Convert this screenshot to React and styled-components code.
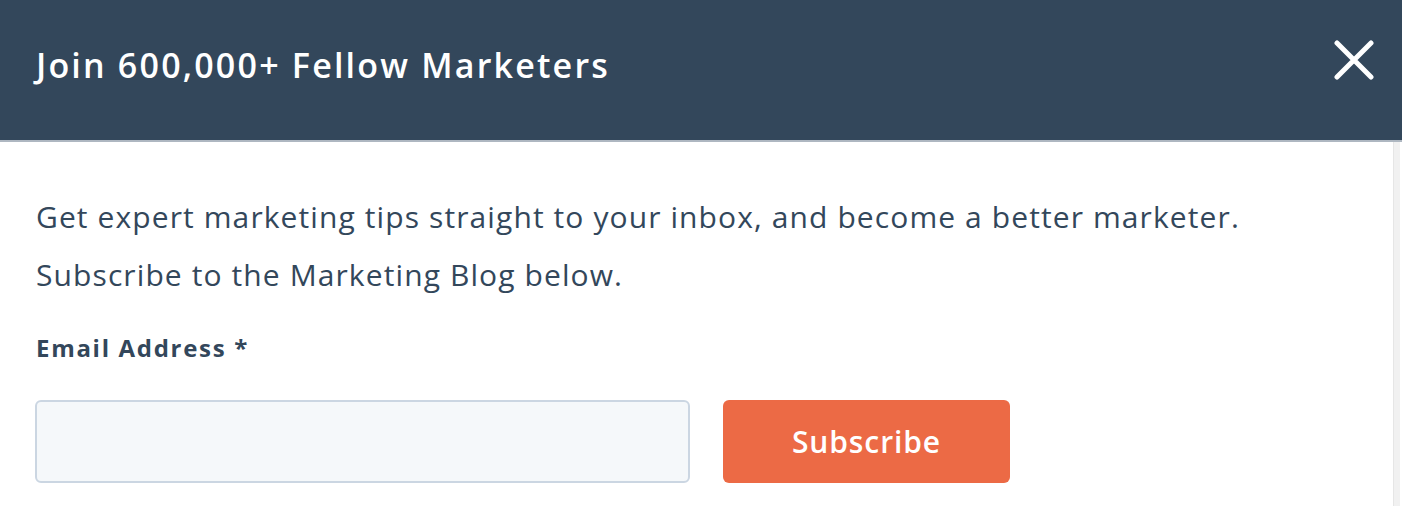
import React from "react"
import styled, { createGlobalStyle } from "styled-components"

const colors = {
  slate: "#33475b",
  white: "#ffffff",
  inputBg: "#f5f8fa",
  inputBorder: "#cbd6e2",
  orange: "#ec6a45",
  track: "#f1f1f1",
}

const GlobalStyle = createGlobalStyle`
  html, body {
    margin: 0;
    padding: 0;
    background: ${colors.white};
  }
  body {
    font-family: "Open Sans", "Liberation Sans", sans-serif;
    color: ${colors.slate};
  }
`

const StyledModal = styled.div`
  width: 1402px;
  height: 506px;
  display: flex;
  flex-direction: column;
  overflow: hidden;
`
const StyledHeader = styled.header`
  display: flex;
  align-items: flex-start;
  justify-content: space-between;
  height: 142px;
  padding: 40px 28px 0 36px;
  box-sizing: border-box;
  background: ${colors.slate};
  border-bottom: 2px solid #aeb7c1;
  flex-shrink: 0;
`
const StyledTitle = styled.h1`
  margin: 3px 0 0;
  font-size: 34px;
  line-height: 44px;
  font-weight: 600;
  color: ${colors.white};
  letter-spacing: 2.2px;
`
const StyledClose = styled.button`
  width: 40px;
  height: 40px;
  padding: 0;
  border: 0;
  background: none;
  display: flex;
  cursor: pointer;
  svg {
    width: 40px;
    height: 40px;
  }
`
const StyledBody = styled.div`
  flex: 1;
  display: flex;
`
const StyledContent = styled.div`
  flex: 1;
  padding: 46px 36px 0;
`
const StyledTrack = styled.div`
  width: 6px;
  margin-right: 2px;
  background: ${colors.track};
  border-left: 1px solid #e6e6e6;
`
const StyledIntro = styled.p`
  margin: 0;
  font-size: 30px;
  line-height: 58px;
  color: ${colors.slate};
  letter-spacing: 1.1px;
`
const StyledLabel = styled.label`
  display: block;
  margin-top: 28px;
  font-size: 24px;
  font-weight: 700;
  line-height: 32px;
  color: ${colors.slate};
  letter-spacing: 1.7px;
`
const StyledRow = styled.div`
  display: flex;
  gap: 33px;
  margin-top: 36px;
  margin-left: -1px;
`
const StyledInput = styled.input`
  width: 655px;
  height: 83px;
  box-sizing: border-box;
  background: ${colors.inputBg};
  border: 2px solid ${colors.inputBorder};
  border-radius: 6px;
  font-size: 24px;
  padding: 0 16px;
  outline: none;
`
const StyledButton = styled.button`
  width: 287px;
  height: 83px;
  border: 0;
  border-radius: 6px;
  background: ${colors.orange};
  color: ${colors.white};
  font-family: "Open Sans", "Liberation Sans", sans-serif;
  font-size: 30px;
  font-weight: 600;
  letter-spacing: 0.9px;
  cursor: pointer;
`

const App = () => (
  <>
    <GlobalStyle />
    <StyledModal>
      <StyledHeader>
        <StyledTitle>Join 600,000+ Fellow Marketers</StyledTitle>
        <StyledClose aria-label="Close">
          <svg viewBox="0 0 40 40" fill="none">
            <path
              d="M3 3 L37 37 M37 3 L3 37"
              stroke="#fff"
              strokeWidth="5"
              strokeLinecap="round"
            />
          </svg>
        </StyledClose>
      </StyledHeader>
      <StyledBody>
        <StyledContent>
          <StyledIntro>
            Get expert marketing tips straight to your inbox, and become a better marketer.
            <br />
            Subscribe to the Marketing Blog below.
          </StyledIntro>
          <StyledLabel htmlFor="email">Email Address *</StyledLabel>
          <StyledRow>
            <StyledInput id="email" type="email" />
            <StyledButton>Subscribe</StyledButton>
          </StyledRow>
        </StyledContent>
        <StyledTrack />
      </StyledBody>
    </StyledModal>
  </>
)

export default App
